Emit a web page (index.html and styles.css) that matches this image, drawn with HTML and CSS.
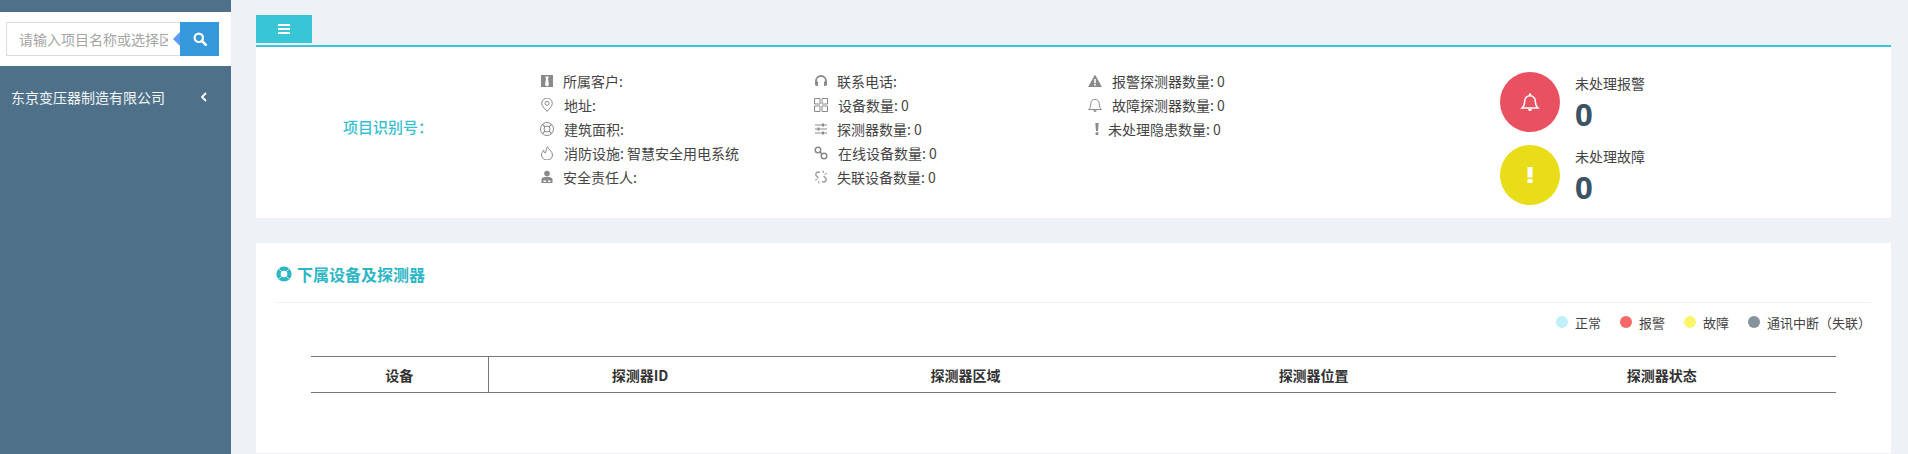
FILE: index.html
```html
<!DOCTYPE html>
<html lang="zh-CN">
<head>
<meta charset="utf-8">
<title>项目详情</title>
<link rel="stylesheet" href="styles.css">
</head>
<body>
<aside class="sidebar">
  <form class="search">
    <input class="search-input" type="text" placeholder="请输入项目名称或选择区域">
    <button class="search-btn" type="button">
      <svg width="14" height="14" viewBox="0 0 14 14"><circle cx="5.8" cy="5.8" r="4.2" fill="none" stroke="#fff" stroke-width="2.2"/><path d="M9 9l3.8 3.8" stroke="#fff" stroke-width="2.6" stroke-linecap="round"/></svg>
    </button>
  </form>
  <div class="menu-item">
    <span>东京变压器制造有限公司</span>
    <svg class="chev" width="8" height="10" viewBox="0 0 8 10"><path d="M6 1L2 5l4 4" fill="none" stroke="#fff" stroke-width="1.8"/></svg>
  </div>
</aside>
<main class="main">
  <div class="tabs">
    <div class="toggle">
      <svg width="12" height="10" viewBox="0 0 12 10"><path d="M0 0h12v2H0zM0 4h12v2H0zM0 8h12v2H0z" fill="#fff"/></svg>
    </div>
  </div>
  <section class="info-card">
    <div class="project-id">项目识别号：</div>
    <ul class="info-col">
      <li><svg class="ic" viewBox="0 0 14 14"><path d="M1 1h12v12H1z" fill="#8a8a8a"/><path d="M5.2 2.5h3.6L8 5l1 6-2 1.500L5 11l1-6z" fill="#fff"/></svg><span>所属客户:</span></li>
      <li class="n2"><svg class="ic" viewBox="0 0 14 14"><path d="M7 13.500C4 10 1.700 7.800 1.700 5.300a5.300 5.300 0 0 1 10.600 0C12.300 7.800 10 10 7 13.500z" fill="none" stroke="#8a8a8a"/><circle cx="7" cy="5.300" r="2" fill="none" stroke="#8a8a8a"/></svg><span>地址:</span></li>
      <li class="n2"><svg class="ic" viewBox="0 0 14 14"><circle cx="7" cy="7" r="6.500" fill="none" stroke="#8a8a8a"/><circle cx="7" cy="7" r="3" fill="none" stroke="#8a8a8a"/><path d="M2.400 2.400l2.500 2.500M11.600 2.400L9.100 4.900M2.400 11.600l2.500-2.500M11.600 11.600L9.100 9.100" stroke="#8a8a8a" stroke-width="1.200"/></svg><span>建筑面积:</span></li>
      <li class="n2"><svg class="ic" viewBox="0 0 14 14"><path d="M7.500.700c.5 2.500 5 4.300 5 8.300a5.500 5 0 0 1-11 0c0-2 1-3.700 2.300-4.800 0 1.500.4 2.600 1.500 2.800C6.300 5 6 3 7.500.700z" fill="none" stroke="#8a8a8a"/></svg><span>消防设施: 智慧安全用电系统</span></li>
      <li><svg class="ic" viewBox="0 0 14 14"><circle cx="7" cy="3.500" r="2.800" fill="#8a8a8a"/><path d="M1.500 13V9.500c0-2 2-2.800 5.500-2.800s5.500.8 5.500 2.800V13z" fill="#8a8a8a"/><path d="M3.500 10.500h2.500v1.500H3.500zM8 10.500h2.500v1.500H8z" fill="#fff"/></svg><span>安全责任人:</span></li>
    </ul>
    <ul class="info-col">
      <li><svg class="ic" viewBox="0 0 14 14"><path d="M2 10V7a5 5 0 0 1 10 0v3" fill="none" stroke="#8a8a8a" stroke-width="1.800"/><path d="M1 7.500h3V12H2.500L1 11zM13 7.500h-3V12h1.500l1.500-1z" fill="#8a8a8a"/></svg><span>联系电话:</span></li>
      <li class="n2"><svg class="ic" viewBox="0 0 14 14"><path d="M.5.500h5.500v5.500H.5zM8 .5h5.500v5.500H8zM.5 8h5.500v5.500H.5zM8 8h5.500v5.500H8z" fill="none" stroke="#8a8a8a"/></svg><span>设备数量: 0</span></li>
      <li><svg class="ic" viewBox="0 0 14 14"><path d="M1 3h12M1 7h12M1 11h12" stroke="#8a8a8a"/><path d="M8 1.500h2v3H8zM3.500 5.500h2v3h-2zM8 9.500h2v3H8z" fill="#8a8a8a"/></svg><span>探测器数量: 0</span></li>
      <li class="n2"><svg class="ic" viewBox="0 0 14 14"><circle cx="4" cy="4" r="2.800" fill="none" stroke="#8a8a8a" stroke-width="1.500"/><circle cx="10" cy="10" r="2.800" fill="none" stroke="#8a8a8a" stroke-width="1.500"/><path d="M5.500 5.500l3 3" stroke="#8a8a8a" stroke-width="1.500"/></svg><span>在线设备数量: 0</span></li>
      <li><svg class="ic" viewBox="0 0 14 14"><path d="M6 2.500C3 1 1 3.500 2 5.500L4.500 8M8 11.500c3 1.500 5-1 4-3L9.500 6" fill="none" stroke="#999" stroke-width="1.300"/><path d="M9 .5l.5 2.500M13 3l-2.500 1.500M1 10l2.500-1M5 13.500l-.5-2.500" stroke="#999"/></svg><span>失联设备数量: 0</span></li>
    </ul>
    <ul class="info-col">
      <li class="n2"><svg class="ic" viewBox="0 0 14 14"><path d="M7 .5L14 13H0z" fill="#8a8a8a"/><path d="M6.200 5h1.600v4.200H6.200zM6.200 10h1.600v1.600H6.200z" fill="#fff"/></svg><span>报警探测器数量: 0</span></li>
      <li class="n2"><svg class="ic" viewBox="0 0 14 14"><path d="M.5 11.500c1.500-1.200 2.300-2.500 2.300-6a4.200 4.200 0 0 1 8.400 0c0 3.500.8 4.800 2.300 6z" fill="none" stroke="#8a8a8a"/><path d="M5.300 12.200a1.700 1.700 0 0 0 3.400 0z" fill="#8a8a8a"/></svg><span>故障探测器数量: 0</span></li>
      <li class="n3"><svg class="ic-small" viewBox="0 0 4 12"><path d="M.3 0h3.400L3 8H1zM.6 9.300h2.800V12H.6z" fill="#8a8a8a"/></svg><span>未处理隐患数量: 0</span></li>
    </ul>
    <div class="stats">
      <div class="stat">
        <div class="stat-circle red"><svg width="20" height="20" viewBox="0 0 20 20"><path d="M2 16c1.800-1.500 2.700-3 2.700-7a5.300 5.300 0 0 1 10.600 0c0 4 .9 5.500 2.700 7z" fill="none" stroke="#fff" stroke-width="1.500"/><circle cx="10" cy="2.500" r="1.200" fill="#fff"/><path d="M8 17a2 2 0 0 0 4 0z" fill="#fff"/></svg></div>
        <div class="stat-body"><div class="stat-label">未处理报警</div><div class="stat-num">0</div></div>
      </div>
      <div class="stat">
        <div class="stat-circle yellow"><svg width="6" height="16" viewBox="0 0 6 16"><path d="M.5 0h5v10.500h-5zM.5 12h5v4h-5z" fill="#fff"/></svg></div>
        <div class="stat-body"><div class="stat-label">未处理故障</div><div class="stat-num">0</div></div>
      </div>
    </div>
  </section>
  <section class="device-card">
    <h2 class="section-title">
      <svg width="16" height="16" viewBox="0 0 16 16"><circle cx="8" cy="8" r="7.600" fill="#2db7c6"/><circle cx="8" cy="8" r="3.300" fill="#fff"/><path d="M2.600 2.600l3 3M13.400 2.600l-3 3M2.600 13.400l3-3M13.400 13.400l-3-3" stroke="#c8eef2" stroke-width="1"/></svg>
      下属设备及探测器
    </h2>
    <div class="legend">
      <span class="legend-item"><i class="dot normal"></i>正常</span>
      <span class="legend-item"><i class="dot alarm"></i>报警</span>
      <span class="legend-item"><i class="dot fault"></i>故障</span>
      <span class="legend-item"><i class="dot lost"></i>通讯中断（失联）</span>
    </div>
    <table class="device-table">
      <thead>
        <tr>
          <th class="c-device">设备</th>
          <th class="c-id">探测器ID</th>
          <th class="c-rest">探测器区域</th>
          <th class="c-rest">探测器位置</th>
          <th class="c-rest">探测器状态</th>
        </tr>
      </thead>
    </table>
  </section>
</main>
</body>
</html>
```

FILE: styles.css
```css
* { box-sizing: border-box; }
html, body { margin: 0; height: 454px; overflow: hidden; }
body {
  display: flex;
  background: #eef1f6;
  font-family: "Noto Sans CJK SC", "Noto Sans", sans-serif;
  font-size: 14px;
  color: #444;
}
.sidebar {
  width: 231px;
  flex: none;
  background: #4e7189;
  padding-top: 12px;
}
.search {
  display: flex;
  height: 54px;
  padding: 10px 12px 10px 6px;
  background: #fff;
}
.search-input {
  width: 174px;
  height: 34px;
  padding: 0 12px;
  border: 1px solid #ddd;
  border-right: 0;
  outline: 0;
  font: 14px "Noto Sans CJK SC", sans-serif;
  background: #fff;
}
.search-input::placeholder { color: #a5a5a5; opacity: 1; }
.search-btn {
  position: relative;
  display: flex;
  align-items: center;
  justify-content: center;
  width: 39px;
  height: 34px;
  padding: 0;
  border: 0;
  background: #3498db;
}
.search-btn::before {
  content: "";
  position: absolute;
  left: -7px;
  top: 10px;
  border-style: solid;
  border-width: 7px 7px 7px 0;
  border-color: transparent #5b9bf5 transparent transparent;
}
.menu-item {
  display: flex;
  align-items: center;
  justify-content: space-between;
  height: 44px;
  margin-top: 9px;
  padding: 0 23px 0 11px;
  color: #f2f5f7;
}
.main {
  flex: 1;
  padding: 15px 17px 0 25px;
  min-width: 0;
}
.tabs { height: 32px; border-bottom: 2px solid #38c6d6; }
.toggle {
  display: flex;
  align-items: center;
  justify-content: center;
  width: 56px;
  height: 28px;
  background: #38c6d6;
}
.info-card {
  display: flex;
  height: 171px;
  background: #fff;
  padding-top: 22px;
}
.project-id {
  width: 256px;
  flex: none;
  padding: 47px 0 0 8px;
  text-align: center;
  font-size: 15px;
  font-weight: 500;
  line-height: 22px;
  color: #38c0d0;
}
.info-col {
  width: 274px;
  flex: none;
  margin: 0;
  padding: 0 0 0 28px;
  list-style: none;
}
.info-col li {
  display: flex;
  align-items: center;
  height: 24px;
  gap: 9px;
  white-space: nowrap;
  color: #444;
}
.info-col li.n2 { gap: 10px; }
.ic { width: 14px; height: 14px; flex: none; }
.ic-small { width: 4px; height: 12px; flex: none; margin-left: 7px; }
.info-col li.n3 { gap: 9px; }
.stats {
  margin-left: 166px;
  margin-top: 3px;
}
.stat {
  display: flex;
  height: 73px;
  gap: 15px;
}
.stat-circle {
  display: flex;
  align-items: center;
  justify-content: center;
  width: 60px;
  height: 60px;
  border-radius: 50%;
}
.red { background: #ea5160; }
.yellow { background: #e9dd19; }
.stat-label { line-height: 20px; margin-top: 1px; color: #444; }
.stat-num {
  margin-top: 1px;
  font-family: "Noto Sans", sans-serif;
  font-size: 31px;
  font-weight: 700;
  line-height: 40px;
  color: #3d5366;
}
.device-card {
  height: 210px;
  margin-top: 25px;
  padding: 0 20px;
  background: #fff;
}
.section-title {
  display: flex;
  align-items: center;
  gap: 5px;
  height: 60px;
  margin: 0;
  padding-top: 3px;
  border-bottom: 1px solid #eef0f2;
  font-size: 16px;
  font-weight: 700;
  color: #2db7c6;
}
.legend {
  display: flex;
  justify-content: flex-end;
  align-items: center;
  gap: 19px;
  height: 38px;
  font-size: 13px;
  color: #444;
}
.legend-item { display: flex; align-items: center; gap: 7px; }
.dot { width: 12px; height: 12px; border-radius: 50%; }
.normal { background: #c0f0f7; }
.alarm { background: #f96868; }
.fault { background: #faf56b; }
.lost { background: #87929b; }
.device-table {
  width: 1525px;
  margin: 15px 0 0 35px;
  border-collapse: collapse;
  table-layout: fixed;
}
.device-table th {
  height: 36px;
  padding: 0;
  border-top: 1px solid #777;
  border-bottom: 1px solid #777;
  font-size: 14px;
  font-weight: 700;
  color: #333;
}
.c-device { width: 177px; border-right: 1px solid #777; }
.c-id { width: 303px; }
.c-rest { width: 348px; }
```
